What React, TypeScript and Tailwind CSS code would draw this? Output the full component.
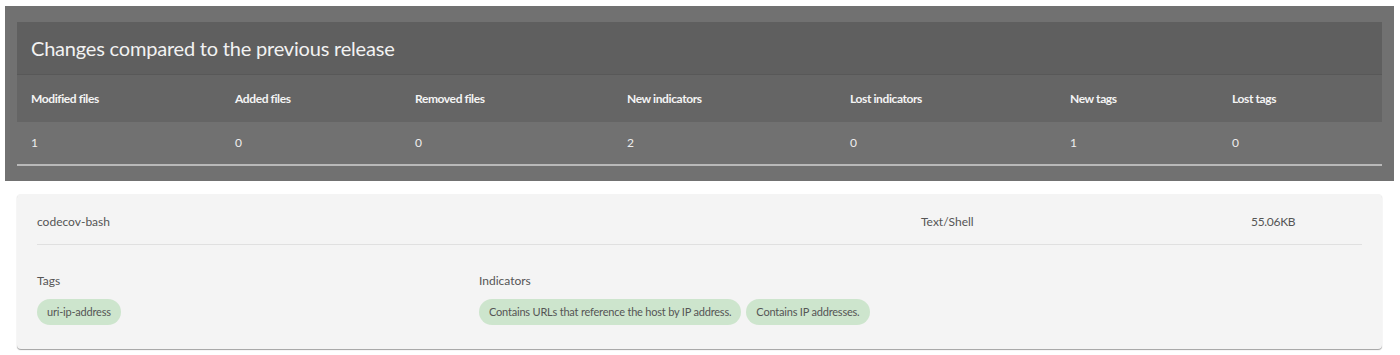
const columns = [
  { label: "Modified files", value: "1", width: "w-[204px]" },
  { label: "Added files", value: "0", width: "w-[180px]" },
  { label: "Removed files", value: "0", width: "w-[212px]" },
  { label: "New indicators", value: "2", width: "w-[223px]" },
  { label: "Lost indicators", value: "0", width: "w-[220px]" },
  { label: "New tags", value: "1", width: "w-[162px]" },
  { label: "Lost tags", value: "0", width: "flex-1" },
];

function Pill({ children }: { children: React.ReactNode }) {
  return (
    <span className="inline-flex h-[26px] items-center rounded-full bg-[#cde5cd] px-[10px] text-[11px] tracking-[-0.2px] text-[#555]">
      {children}
    </span>
  );
}

export default function App() {
  return (
    <div className="h-[355px] w-[1400px] bg-white pt-[6px] pl-[5px] font-['Lato',sans-serif]">
      <div className="w-[1389px] bg-[#717171] px-[12px] pt-[16px] pb-[15px]">
        <div className="flex h-[53px] items-center border-b border-[#585858] bg-[#5f5f5f] px-[14px]">
          <h2 className="text-[20px] font-normal tracking-[-0.2px] text-[#f2f2f2]">
            Changes compared to the previous release
          </h2>
        </div>
        <div className="flex h-[47px] items-center bg-[#656565] px-[14px]">
          {columns.map((c) => (
            <div key={c.label} className={`${c.width} shrink-0 text-[12px] font-bold tracking-[-0.4px] text-[#f4f4f4]`}>
              {c.label}
            </div>
          ))}
        </div>
        <div className="flex h-[44px] items-center border-b-2 border-[#b9b9b9] px-[14px]">
          {columns.map((c) => (
            <div key={c.label} className={`${c.width} shrink-0 text-[12px] text-[#eeeeee]`}>
              {c.value}
            </div>
          ))}
        </div>
      </div>

      <div className="mt-[13px] ml-[12px] w-[1365px] rounded-[4px] bg-[#f4f4f4] px-[20px] pb-[24px] shadow-[0_1px_1px_#a0a0a0]">
        <div className="flex h-[51px] items-center border-b border-[#e0e0e0] pt-[6px] text-[12px] text-[#555]">
          <div className="w-[884px] shrink-0">codecov-bash</div>
          <div className="w-[330px] shrink-0">Text/Shell</div>
          <div className="tracking-[-0.3px]">55.06KB</div>
        </div>
        <div className="flex pt-[27px]">
          <div className="w-[442px] shrink-0">
            <div className="text-[12px] text-[#555]">Tags</div>
            <div className="mt-[9px] flex gap-[5px]">
              <Pill>uri-ip-address</Pill>
            </div>
          </div>
          <div>
            <div className="text-[12px] text-[#555]">Indicators</div>
            <div className="mt-[9px] flex gap-[5px]">
              <Pill>Contains URLs that reference the host by IP address.</Pill>
              <Pill>Contains IP addresses.</Pill>
            </div>
          </div>
        </div>
      </div>
    </div>
  );
}
